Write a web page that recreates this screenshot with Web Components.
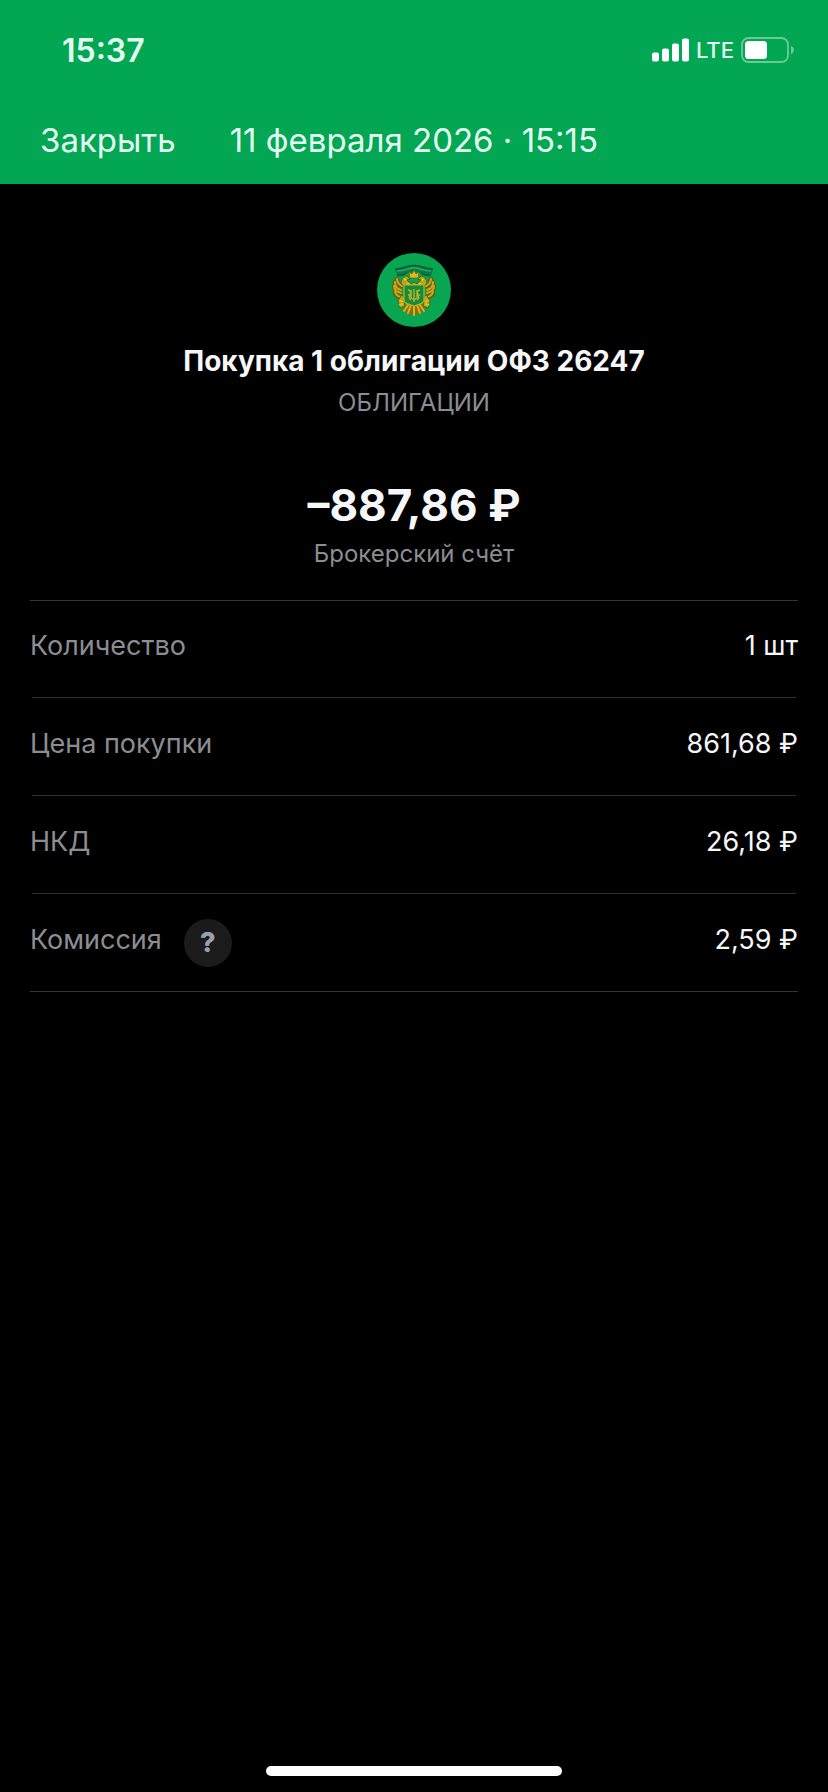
<!DOCTYPE html>
<html lang="ru">
<head>
<meta charset="utf-8">
<meta name="viewport" content="width=device-width, initial-scale=1">
<title>Детали операции</title>
<style>
  body {
    margin: 0;
    background: #000;
    color: #f6f7f8;
    font-family: Inter, "Liberation Sans", sans-serif;
  }
</style>
</head>
<body>
<deal-screen>
  <status-bar slot="header" time="15:37" network="LTE" battery="55"></status-bar>
  <nav-bar slot="header">
    <span slot="action">Закрыть</span>
    11 февраля 2026 · 15:15
  </nav-bar>

  <deal-summary>
    <bond-logo slot="logo"></bond-logo>
    <span slot="title">Покупка 1 облигации ОФЗ 26247</span>
    <span slot="type">ОБЛИГАЦИИ</span>
    <span slot="amount">–887,86 ₽</span>
    <span slot="account">Брокерский счёт</span>
  </deal-summary>

  <detail-list>
    <detail-row label="Количество">1 шт</detail-row>
    <detail-row label="Цена покупки">861,68 ₽</detail-row>
    <detail-row label="НКД">26,18 ₽</detail-row>
    <detail-row label="Комиссия">
      <help-button slot="hint"></help-button>
      2,59 ₽
    </detail-row>
  </detail-list>
</deal-screen>

<script>
function makeTemplate(html) {
  const template = document.createElement("template");
  template.innerHTML = html;
  return template;
}

class BaseElement extends HTMLElement {
  constructor() {
    super();
    this.attachShadow({ mode: "open" });
    this.shadowRoot.appendChild(this.constructor.template.content.cloneNode(true));
  }

  $(selector) {
    return this.shadowRoot.querySelector(selector);
  }
}

class DealScreen extends BaseElement {
  static template = makeTemplate(`
    <style>
      :host {
        display: flex;
        flex-direction: column;
        min-height: 100vh;
      }
      header {
        background: #02a653;
        color: #e4fff1;
      }
      main {
        flex: 1;
        padding: 69px 30px 30px;
      }
      .home {
        align-self: center;
        width: 296px;
        height: 10px;
        margin-bottom: 16px;
        border-radius: 5px;
        background: #fff;
      }
    </style>
    <header><slot name="header"></slot></header>
    <main><slot></slot></main>
    <div class="home"></div>
  `);
}

class StatusBar extends BaseElement {
  static template = makeTemplate(`
    <style>
      :host {
        display: flex;
        align-items: center;
        justify-content: space-between;
        height: 100px;
        padding: 0 34px 0 62px;
      }
      .time {
        font-size: 32px;
        font-weight: 600;
      }
      .icons {
        display: flex;
        align-items: center;
        gap: 7px;
      }
      .network {
        font-size: 22px;
        font-weight: 500;
      }
      svg {
        display: block;
      }
    </style>
    <span class="time"></span>
    <div class="icons">
      <svg width="37" height="24" viewBox="0 0 37 24" fill="#fff" aria-hidden="true">
        <rect x="0" y="14.5" width="7" height="9" rx="2"/>
        <rect x="10" y="10.5" width="7" height="13" rx="2"/>
        <rect x="20" y="5.5" width="7" height="18" rx="2"/>
        <rect x="30" y="0.5" width="7" height="23" rx="2"/>
      </svg>
      <span class="network"></span>
      <svg width="53" height="26" viewBox="0 0 53 26" aria-hidden="true">
        <rect x="1" y="1" width="46" height="24" rx="6.5" fill="none" stroke="#6bcb98" stroke-width="1.8"/>
        <path d="M50 9c2 .8 3 2.200 3 4s-1 3.200-3 4z" fill="#6bcb98"/>
        <rect class="level" x="4" y="4" width="0" height="18" rx="3.500" fill="#fff"/>
      </svg>
    </div>
  `);

  connectedCallback() {
    this.$(".time").textContent = this.getAttribute("time");
    this.$(".network").textContent = this.getAttribute("network");
    this.$(".level").setAttribute("width", Math.round(40 * this.getAttribute("battery") / 100));
  }
}

class NavBar extends BaseElement {
  static template = makeTemplate(`
    <style>
      :host {
        display: flex;
        align-items: center;
        gap: 54px;
        height: 80px;
        padding: 0 40px 4px;
        font-size: 33px;
      }
      button {
        padding: 0;
        border: 0;
        background: none;
        color: inherit;
        font: inherit;
        cursor: pointer;
      }
    </style>
    <button type="button"><slot name="action"></slot></button>
    <div><slot></slot></div>
  `);
}

class BondLogo extends BaseElement {
  static template = makeTemplate(`
    <style>
      :host, svg {
        display: block;
      }
    </style>
    <svg width="74" height="74" viewBox="0 0 74 74" aria-hidden="true">
      <circle cx="37" cy="37" r="37" fill="#08a650"/>
      <!-- ribbon -->
      <path d="M18 16c5 0 8-1 12-2.500 5-1.500 9-1.500 14 0 4 1.500 7 2.500 12 2.500l-2 6c-3 1-6 .5-8-1-3-2-15-2-18 0-2 1.500-5 2-8 1z" fill="#087c47"/>
      <path d="M18 16c5 0 8-1 12-2.500 5-1.500 9-1.500 14 0 4 1.500 7 2.500 12 2.500" fill="none" stroke="#075f3a" stroke-width="1.500"/>
      <path d="M20 18c5 0 8-1 11-2 4-1.500 8-1.500 12 0 3 1 6 2 11 2" fill="none" stroke="#2fa65a" stroke-width="1.500"/>
      <path d="M20 22c5 2 7-1 10-2M54 22c-5 2-7-1-10-2" fill="none" stroke="#075a38" stroke-width="1.500"/>
      <!-- wings -->
      <g fill="none" stroke="#5d6415" stroke-width="4.500" stroke-linecap="round">
        <path d="M24 33c-3-2-4-4-4-7M23 36c-4-1-5-4-5-7M23 40c-4-1-6-4-6-7M24 44c-4 0-6-2-6-5"/>
        <path d="M50 33c3-2 4-4 4-7M51 36c4-1 5-4 5-7M51 40c4-1 6-4 6-7M50 44c4 0 6-2 6-5"/>
      </g>
      <g fill="none" stroke="#d0a91b" stroke-width="2" stroke-linecap="round">
        <path d="M25 33c-4-2-5-4-5-7M24 37c-4-1-6-4-6-8M24 40c-4-1-7-3-7-7M25 44c-4 0-6-2-7-5"/>
        <path d="M49 33c4-2 5-4 5-7M50 37c4-1 6-4 6-8M50 40c4-1 7-3 7-7M49 44c4 0 6-2 7-5"/>
      </g>
      <!-- heads and crown -->
      <path d="M24 31c0-5 3-8 6-8l3 3-3 1 4 4 3-2 3 2 4-4-3-1 3-3c3 0 6 3 6 8l-5 3H29z" fill="#b8a51c" stroke="#4e6518" stroke-width="1"/>
      <path d="M32 19l3 2 2-4 2 4 3-2-1 6h-8z" fill="#e5bd1a" stroke="#6c6a12" stroke-width=".8"/>
      <path d="M27 26l2 1M47 26l-2 1M30 30l3 2M44 30l-3 2" stroke="#efca2b" stroke-width="1.500"/>
      <!-- claws -->
      <path d="M24 43l-3 5 2 7 5-2-1-4 3-2M50 43l3 5-2 7-5-2 1-4-3-2" fill="#c6a51a" stroke="#536515" stroke-width="1"/>
      <path d="M22 47l4 2M22 52l4-1M52 47l-4 2M52 52l-4-1" stroke="#ebc027" stroke-width="1.300"/>
      <!-- tail -->
      <path d="M29 51c-1 5-4 6-4 8l5 0 2 3 3-1 2 2 2-2 3 1 2-3 5 0c0-2-3-3-4-8z" fill="#876f0d"/>
      <path d="M31 52l-4 6M34 52l-3 8M37 52v10M40 52l3 8M43 52l4 6" stroke="#ddb120" stroke-width="2" stroke-linecap="round"/>
      <!-- shield -->
      <path d="M27 32h20v15c0 3-3 4-10 6-7-2-10-3-10-6z" fill="#168b3b" stroke="#b5b12a" stroke-width="1.200"/>
      <path d="M31 37c3 0 3 3 2 5s-1 4 1 5M43 37c-3 0-3 3-2 5s1 4-1 5M37 36v13M34 37v8l3 2 3-2v-8M31 42h3M40 42h3" fill="none" stroke="#bdb329" stroke-width="1.300"/>
    </svg>
  `);
}

class DealSummary extends BaseElement {
  static template = makeTemplate(`
    <style>
      :host {
        display: flex;
        flex-direction: column;
        align-items: center;
        text-align: center;
      }
      h1, p {
        margin: 0;
      }
      h1 {
        margin-top: 16px;
        font-size: 28px;
        font-weight: 700;
        line-height: 36px;
      }
      .note {
        color: #8c8d92;
        font-size: 24px;
        line-height: 32px;
      }
      .type {
        margin-top: 8px;
      }
      .amount {
        margin-top: 58px;
        font-size: 44px;
        font-weight: 700;
        line-height: 56px;
      }
      .account {
        margin-top: 5px;
      }
    </style>
    <slot name="logo"></slot>
    <h1><slot name="title"></slot></h1>
    <p class="note type"><slot name="type"></slot></p>
    <p class="amount"><slot name="amount"></slot></p>
    <p class="note account"><slot name="account"></slot></p>
  `);
}

class DetailList extends BaseElement {
  static template = makeTemplate(`
    <style>
      :host {
        display: block;
        margin-top: 30px;
        border-top: 1px solid #343536;
        border-bottom: 1px solid #343536;
      }
    </style>
    <slot></slot>
  `);
}

class DetailRow extends BaseElement {
  static template = makeTemplate(`
    <style>
      :host {
        display: block;
      }
      /* dividers are a little shorter than the list borders */
      :host(:not(:last-child))::after {
        content: "";
        display: block;
        height: 1px;
        margin: 0 2px 1px;
        background: #2f3031;
      }
      dl {
        display: flex;
        align-items: center;
        justify-content: space-between;
        height: 96px;
        margin: 0;
        font-size: 27px;
        line-height: 36px;
      }
      dt {
        display: flex;
        align-items: center;
        gap: 22px;
        color: #8c8d92;
      }
      dd {
        margin: 0;
      }
      .label, dd {
        padding-bottom: 6px;
      }
    </style>
    <dl>
      <dt><span class="label"></span><slot name="hint"></slot></dt>
      <dd><slot></slot></dd>
    </dl>
  `);

  connectedCallback() {
    this.$(".label").textContent = this.getAttribute("label");
  }
}

class HelpButton extends BaseElement {
  static template = makeTemplate(`
    <style>
      :host {
        display: block;
      }
      button {
        display: block;
        width: 48px;
        height: 48px;
        padding: 0;
        border: 0;
        border-radius: 50%;
        background: #1b1b1c;
        color: #97a2ad;
        font: 800 27px/48px Inter, "Liberation Sans", sans-serif;
        cursor: pointer;
      }
    </style>
    <button type="button">?</button>
  `);
}

customElements.define("deal-screen", DealScreen);
customElements.define("status-bar", StatusBar);
customElements.define("nav-bar", NavBar);
customElements.define("bond-logo", BondLogo);
customElements.define("deal-summary", DealSummary);
customElements.define("detail-list", DetailList);
customElements.define("detail-row", DetailRow);
customElements.define("help-button", HelpButton);
</script>
</body>
</html>
